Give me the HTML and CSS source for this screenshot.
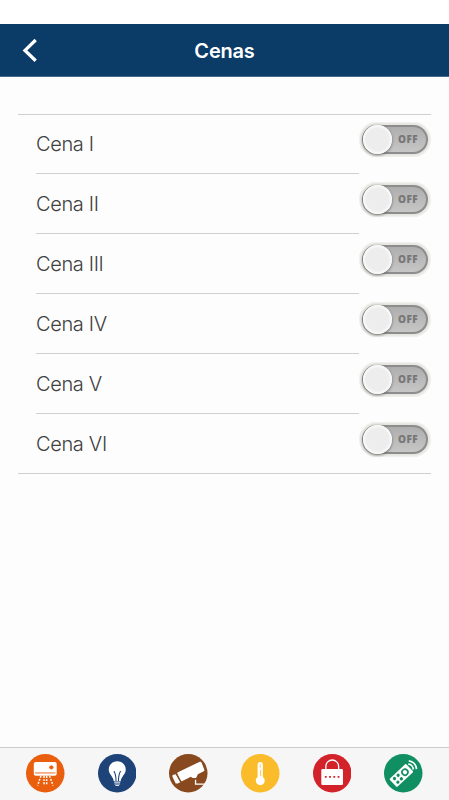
FILE: index.html
```html
<!DOCTYPE html>
<html lang="pt-BR">
<head>
  <meta charset="UTF-8" />
  <meta name="viewport" content="width=device-width, initial-scale=1" />
  <title>Cenas</title>
  <link rel="stylesheet" href="styles.css">
</head>
<body>
  <div class="app">
    <header class="navbar">
      <button class="back" aria-label="Voltar">
        <svg width="16" height="26" viewBox="0 0 16 26"><path d="M13.7 2 3 12.4l10.7 10.4" fill="none" stroke="#fff" stroke-width="3.3"/></svg>
      </button>
      <h1>Cenas</h1>
    </header>

    <main>
      <ul class="list">
        <li><span class="label">Cena I</span><button class="switch"><span class="track">OFF</span></button></li>
        <li><span class="label">Cena II</span><button class="switch"><span class="track">OFF</span></button></li>
        <li><span class="label">Cena III</span><button class="switch"><span class="track">OFF</span></button></li>
        <li><span class="label">Cena IV</span><button class="switch"><span class="track">OFF</span></button></li>
        <li><span class="label">Cena V</span><button class="switch"><span class="track">OFF</span></button></li>
        <li><span class="label">Cena VI</span><button class="switch"><span class="track">OFF</span></button></li>
      </ul>
    </main>

    <nav class="tabbar">
      <!-- Ar condicionado -->
      <svg viewBox="0 0 38 38">
        <circle cx="19" cy="19" r="19" fill="#ea5f0e"/>
        <rect x="7.7" y="7.8" width="22.6" height="13.6" rx="2" fill="#fff"/>
        <path d="M9 18.7h20" stroke="#ea5f0e" stroke-width=".9"/>
        <path d="M25 11v4.4M22.8 13.2h4.4M23.4 11.6l3.2 3.2M26.6 11.6l-3.2 3.2" stroke="#ea5f0e" stroke-width="1"/>
        <path d="M14.7 21.8 11.5 31M17.8 21.8v9.2M20.4 21.8v9.2M23.3 21.8l3.4 9.2" fill="none" stroke="#fff" stroke-width="1.5" stroke-dasharray="1.8 1.3"/>
      </svg>
      <!-- Iluminação -->
      <svg viewBox="0 0 38 38">
        <circle cx="19" cy="19" r="19" fill="#1e4379"/>
        <path d="M19 7.2c-4.9 0-8.4 3.7-8.4 8.1 0 4.7 4.4 6.8 5 11.5h6.8c.6-4.7 5-6.8 5-11.5 0-4.4-3.5-8.1-8.4-8.1z" fill="#fff"/>
        <path d="M17.8 26.6c0-4.5-.5-7.2-2.1-9.7M20.2 26.6c0-4.5.5-7.2 2.1-9.7" fill="none" stroke="#1e4379" stroke-width="1"/>
        <path d="M16 28h6M16.2 29.7h5.6M17.2 31.2h3.6" stroke="#dce3ed" stroke-width="1"/>
      </svg>
      <!-- Câmeras -->
      <svg viewBox="0 0 38 38">
        <circle cx="19" cy="19" r="19" fill="#88491e"/>
        <path d="M8.8 18 30 7.8c1.1-.5 1.8-.1 2.3 1l2.5 6.4c.4 1.1 0 1.6-1 2.1L28.5 20l-1.8 3.6h-3.5l-1.6-1.1-8.3 4.2c-1 .5-1.5.2-2-.8L8.2 19.5c-.3-.8-.2-1.1.6-1.5z" fill="#fff"/>
        <path d="m3.5 20.8 3.1-.8 4.5 7.8-2.4 1.4-2.1-.2-3.2-6.5z" fill="#fff"/>
        <path d="m7.4 19.6 4.3 7.6" stroke="#88491e" stroke-width="1"/>
        <path d="M26.2 25.5v4.2h9.5" fill="none" stroke="#fff" stroke-width="1.3"/>
      </svg>
      <!-- Temperatura -->
      <svg viewBox="0 0 38 38">
        <circle cx="19" cy="19" r="19" fill="#fbbc2c"/>
        <path d="M16.4 10.5a2.6 2.6 0 0 1 5.2 0v12.3a4.4 4.4 0 1 1-5.2 0z" fill="#fff"/>
        <path d="M19 10.2v3.2M19.4 15.5v6.5" stroke="#fbbc2c" stroke-width=".8"/>
      </svg>
      <!-- Alarme -->
      <svg viewBox="0 0 38 38">
        <circle cx="19" cy="19" r="19" fill="#d2222a"/>
        <path d="M12.7 15.5v-3.3a6.3 6.3 0 0 1 12.6 0v3.3" fill="none" stroke="#fff" stroke-width="1.3"/>
        <rect x="8.2" y="14.7" width="21.4" height="16" rx="1.3" fill="#fff"/>
        <path d="M11.7 22.5h1.8M15.9 22.5h1.8M20.1 22.5h1.8M24.3 22.5h1.8" stroke="#d2222a" stroke-width="1.8"/>
      </svg>
      <!-- Controle remoto -->
      <svg viewBox="0 0 38 38">
        <circle cx="19" cy="19" r="19" fill="#108f63"/>
        <g transform="translate(17.6 20.8) rotate(-43)">
          <rect x="-11.8" y="-5.5" width="22.4" height="11" rx="1" fill="#fff"/>
          <g fill="#108f63">
            <circle cx="-7.6" cy="-2.4" r="1.6"/><circle cx="-7.6" cy="2.4" r="1.6"/>
            <circle cx="-2.8" cy="-2.4" r="1.6"/><circle cx="-2.8" cy="2.4" r="1.6"/>
          </g>
          <circle cx="4.2" cy="0" r="2.9" fill="none" stroke="#108f63" stroke-width="1.6"/>
          <path d="M12-3.6a5.2 5.2 0 0 1 0 7.2M14.6-5.6a8.4 8.4 0 0 1 0 11.2" fill="none" stroke="#fff" stroke-width="1.7"/>
        </g>
      </svg>
    </nav>
  </div>
</body>
</html>
```

FILE: styles.css
```css
* {
  box-sizing: border-box;
}

body {
  margin: 0;
  background: #fdfdfd;
  font-family: Inter, "Liberation Sans", sans-serif;
  color: #404040;
}

button {
  padding: 0;
  border: none;
  background: none;
}

.app {
  display: flex;
  flex-direction: column;
  height: 800px;
  padding-top: 24px;
  background: linear-gradient(#fff 24px, #fdfdfd 24px);
}

.navbar {
  display: grid;
  grid-template-columns: 60px 1fr 60px;
  align-items: center;
  height: 53px;
  background: #0b3b67;
  border-bottom: 1px solid #49698a;
}

.back {
  display: flex;
  padding: 1px 0 0 22px;
}

.navbar h1 {
  margin: 0;
  padding-top: 1px;
  font-size: 20px;
  font-weight: 600;
  line-height: 24px;
  letter-spacing: -0.2px;
  text-align: center;
  color: #fff;
}

main {
  flex: 1;
  padding: 37px 18px 0;
}

.list {
  margin: 0;
  padding: 0;
  list-style: none;
  border-top: 1px solid #d0d0d0;
  border-bottom: 1px solid #d0d0d0;
}

.list li {
  display: flex;
  height: 60px;
  padding-left: 18px;
}

.list li:first-child,
.list li:last-child {
  height: 59px;
}

.label {
  flex: 1;
  padding-top: 18px;
  border-bottom: 1px solid #d0d0d0;
  font-size: 20px;
  font-weight: 300;
  line-height: 24px;
  letter-spacing: -0.35px;
}

.list li:first-child .label {
  padding-top: 17px;
}

.list li:last-child .label {
  border-bottom: none;
}

.switch {
  position: relative;
  width: 72px;
  height: 35px;
  padding: 3px;
  margin-top: 8px;
  border-radius: 18px;
  background: #e2e1dc;
  box-shadow: inset 0 0 3px 1px #f8f8f7;
}

.list li:first-child .switch {
  margin-top: 7px;
}

.track {
  display: block;
  height: 29px;
  padding-right: 8px;
  border: 2px solid #8d8d8d;
  border-radius: 15px;
  background: linear-gradient(#aeaeae, #c6c6c6);
  font: 800 10px/25px "Open Sans", sans-serif;
  letter-spacing: 0.4px;
  text-align: right;
  color: #777;
}

/* botão redondo do interruptor */
.switch::after {
  content: "";
  position: absolute;
  left: 4px;
  top: 3px;
  width: 29px;
  height: 29px;
  border-radius: 50%;
  background: #ededed;
  box-shadow: inset 0 0 2px 2px #f9f9f9, 0 1px 3px #666;
}

.tabbar {
  display: flex;
  justify-content: space-between;
  height: 53px;
  padding: 6px 26px 0;
  border-top: 1px solid #ccc;
  background: #f6f6f6;
}

.tabbar svg {
  width: 38.5px;
  height: 38.5px;
}
```
